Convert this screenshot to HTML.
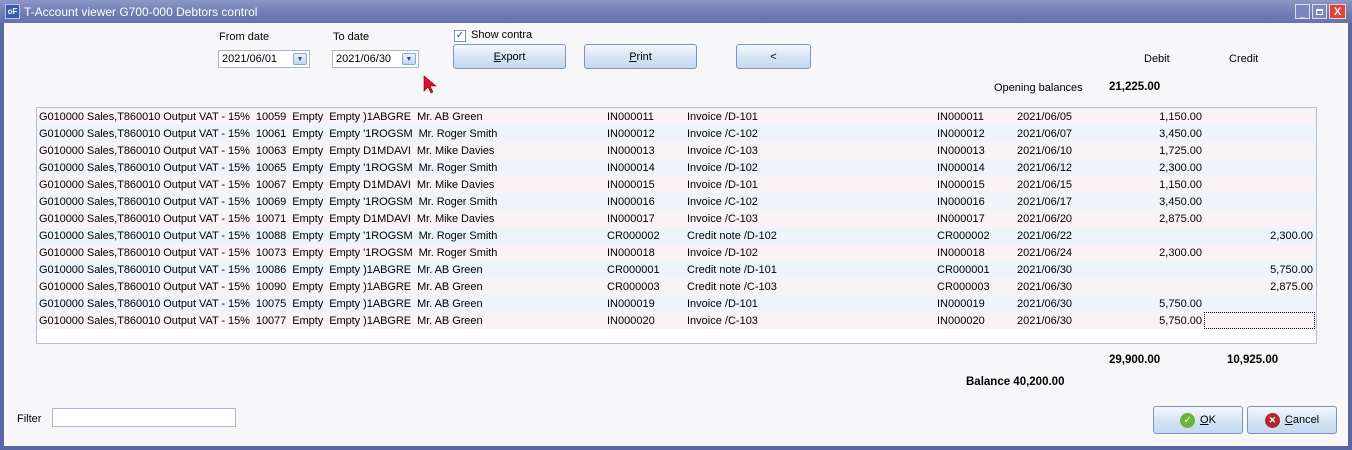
<!DOCTYPE html>
<html><head><style>
*{margin:0;padding:0;box-sizing:border-box}
body{width:1352px;height:450px;overflow:hidden;background:#5966a4;font-family:"Liberation Sans",sans-serif;font-size:11px;color:#000;position:relative}
.tb{position:absolute;left:0;top:0;width:1352px;height:23px;background:linear-gradient(#8d97c6,#6e7bb3 60%,#6574ad);color:#fff;font-size:12px}
.cl{position:absolute;left:4px;top:23px;right:4px;bottom:4px;background:#f7f7fa}
.a{position:absolute;white-space:nowrap}
.btn{position:absolute;height:25px;border:1px solid #7c95c0;border-radius:3px;background:linear-gradient(#f4f8fd,#d7e5f5 50%,#c2d7ef);text-align:center;line-height:24px;font-size:11px}
.dd{position:absolute;height:18px;border:1px solid #a9b6d4;background:#fff;padding-left:3px;line-height:16px}
.dd i{position:absolute;right:2px;top:2px;width:14px;height:12px;border:1px solid #8fa6cf;border-radius:2px;background:linear-gradient(#eaf1fb,#c4d6ef);font-style:normal;font-size:7px;line-height:11px;text-align:center;color:#2a4f9a}
.grid{position:absolute;left:36px;top:107px;width:1281px;height:237px;background:#fff;border:1px solid #b6bfd8}
.r{position:absolute;left:0;width:1279px;height:17px;line-height:19px}
.r span{position:absolute}
.r span:first-child{letter-spacing:-0.05px}
.b{font-weight:bold;font-size:11.5px}
</style></head><body>
<div class="tb">
<div class="a" style="left:5px;top:4px;width:15px;height:15px;background:#3c5bb0;border:1px solid #b8c4ea;color:#fff;font-size:8px;font-weight:bold;line-height:13px;text-align:center">oF</div>
<div class="a" style="left:24px;top:5px">T-Account viewer G700-000 Debtors control</div>
<div class="a" style="left:1295px;top:4px;width:15px;height:15px;border:1px solid #dde;background:#7b87be;color:#fff;font-size:9px;text-align:center;line-height:16px">_</div>
<div class="a" style="left:1312px;top:4px;width:15px;height:15px;border:1px solid #dde;background:#7b87be"><div style="margin:4px 3px;width:7px;height:6px;border:1px solid #fff;border-top-width:2px"></div></div>
<div class="a" style="left:1329px;top:4px;width:17px;height:15px;border:1px solid #fcc;background:#e0453a;color:#fff;font-weight:bold;font-size:11px;text-align:center;line-height:14px">X</div>
</div>
<div class="cl"></div>
<div class="a" style="left:219px;top:31px">From date</div>
<div class="a" style="left:333px;top:31px">To date</div>
<div class="dd" style="left:218px;top:50px;width:92px">2021/06/01<i>▼</i></div>
<div class="dd" style="left:332px;top:50px;width:87px">2021/06/30<i>▼</i></div>
<div class="a" style="left:454px;top:30px;width:12px;height:12px;border:1px solid #7b93c4;background:#fff;color:#2a4f9a;font-size:10px;line-height:10px;text-align:center">✓</div>
<div class="a" style="left:471px;top:29px">Show contra</div>
<div class="btn" style="left:453px;top:44px;width:113px"><u>E</u>xport</div>
<div class="btn" style="left:584px;top:44px;width:113px"><u>P</u>rint</div>
<div class="btn" style="left:736px;top:44px;width:75px">&lt;</div>
<svg class="a" style="left:423px;top:75px" width="16" height="20"><path d="M1 1 L1 16 L5 12 L8 18 L10 17 L7 11 L13 11 Z" fill="#e0102a" stroke="#700" stroke-width="0.6"/></svg>
<div class="a" style="left:1144px;top:53px">Debit</div>
<div class="a" style="left:1229px;top:53px">Credit</div>
<div class="a" style="left:994px;top:82px">Opening balances</div>
<div class="a b" style="left:1109px;top:81px">21,225.00</div>
<div class="grid">
<div class="r" style="top:0;background:#f9f3f6"><span style="left:2px">G010000 Sales,T860010 Output VAT - 15%&nbsp; 10059&nbsp; Empty&nbsp; Empty )1ABGRE&nbsp; Mr. AB Green</span><span style="left:570px">IN000011</span><span style="left:650px">Invoice /D-101</span><span style="left:900px">IN000011</span><span style="left:980px">2021/06/05</span><span style="right:114px">1,150.00</span></div>
<div class="r" style="top:17px;background:#edf4fb"><span style="left:2px">G010000 Sales,T860010 Output VAT - 15%&nbsp; 10061&nbsp; Empty&nbsp; Empty '1ROGSM&nbsp; Mr. Roger Smith</span><span style="left:570px">IN000012</span><span style="left:650px">Invoice /C-102</span><span style="left:900px">IN000012</span><span style="left:980px">2021/06/07</span><span style="right:114px">3,450.00</span></div>
<div class="r" style="top:34px;background:#f9f3f6"><span style="left:2px">G010000 Sales,T860010 Output VAT - 15%&nbsp; 10063&nbsp; Empty&nbsp; Empty D1MDAVI&nbsp; Mr. Mike Davies</span><span style="left:570px">IN000013</span><span style="left:650px">Invoice /C-103</span><span style="left:900px">IN000013</span><span style="left:980px">2021/06/10</span><span style="right:114px">1,725.00</span></div>
<div class="r" style="top:51px;background:#edf4fb"><span style="left:2px">G010000 Sales,T860010 Output VAT - 15%&nbsp; 10065&nbsp; Empty&nbsp; Empty '1ROGSM&nbsp; Mr. Roger Smith</span><span style="left:570px">IN000014</span><span style="left:650px">Invoice /D-102</span><span style="left:900px">IN000014</span><span style="left:980px">2021/06/12</span><span style="right:114px">2,300.00</span></div>
<div class="r" style="top:68px;background:#f9f3f6"><span style="left:2px">G010000 Sales,T860010 Output VAT - 15%&nbsp; 10067&nbsp; Empty&nbsp; Empty D1MDAVI&nbsp; Mr. Mike Davies</span><span style="left:570px">IN000015</span><span style="left:650px">Invoice /D-101</span><span style="left:900px">IN000015</span><span style="left:980px">2021/06/15</span><span style="right:114px">1,150.00</span></div>
<div class="r" style="top:85px;background:#edf4fb"><span style="left:2px">G010000 Sales,T860010 Output VAT - 15%&nbsp; 10069&nbsp; Empty&nbsp; Empty '1ROGSM&nbsp; Mr. Roger Smith</span><span style="left:570px">IN000016</span><span style="left:650px">Invoice /C-102</span><span style="left:900px">IN000016</span><span style="left:980px">2021/06/17</span><span style="right:114px">3,450.00</span></div>
<div class="r" style="top:102px;background:#f9f3f6"><span style="left:2px">G010000 Sales,T860010 Output VAT - 15%&nbsp; 10071&nbsp; Empty&nbsp; Empty D1MDAVI&nbsp; Mr. Mike Davies</span><span style="left:570px">IN000017</span><span style="left:650px">Invoice /C-103</span><span style="left:900px">IN000017</span><span style="left:980px">2021/06/20</span><span style="right:114px">2,875.00</span></div>
<div class="r" style="top:119px;background:#edf4fb"><span style="left:2px">G010000 Sales,T860010 Output VAT - 15%&nbsp; 10088&nbsp; Empty&nbsp; Empty '1ROGSM&nbsp; Mr. Roger Smith</span><span style="left:570px">CR000002</span><span style="left:650px">Credit note /D-102</span><span style="left:900px">CR000002</span><span style="left:980px">2021/06/22</span><span style="right:3px">2,300.00</span></div>
<div class="r" style="top:136px;background:#f9f3f6"><span style="left:2px">G010000 Sales,T860010 Output VAT - 15%&nbsp; 10073&nbsp; Empty&nbsp; Empty '1ROGSM&nbsp; Mr. Roger Smith</span><span style="left:570px">IN000018</span><span style="left:650px">Invoice /D-102</span><span style="left:900px">IN000018</span><span style="left:980px">2021/06/24</span><span style="right:114px">2,300.00</span></div>
<div class="r" style="top:153px;background:#edf4fb"><span style="left:2px">G010000 Sales,T860010 Output VAT - 15%&nbsp; 10086&nbsp; Empty&nbsp; Empty )1ABGRE&nbsp; Mr. AB Green</span><span style="left:570px">CR000001</span><span style="left:650px">Credit note /D-101</span><span style="left:900px">CR000001</span><span style="left:980px">2021/06/30</span><span style="right:3px">5,750.00</span></div>
<div class="r" style="top:170px;background:#f9f3f6"><span style="left:2px">G010000 Sales,T860010 Output VAT - 15%&nbsp; 10090&nbsp; Empty&nbsp; Empty )1ABGRE&nbsp; Mr. AB Green</span><span style="left:570px">CR000003</span><span style="left:650px">Credit note /C-103</span><span style="left:900px">CR000003</span><span style="left:980px">2021/06/30</span><span style="right:3px">2,875.00</span></div>
<div class="r" style="top:187px;background:#edf4fb"><span style="left:2px">G010000 Sales,T860010 Output VAT - 15%&nbsp; 10075&nbsp; Empty&nbsp; Empty )1ABGRE&nbsp; Mr. AB Green</span><span style="left:570px">IN000019</span><span style="left:650px">Invoice /D-101</span><span style="left:900px">IN000019</span><span style="left:980px">2021/06/30</span><span style="right:114px">5,750.00</span></div>
<div class="r" style="top:204px;background:#f9f3f6"><span style="left:2px">G010000 Sales,T860010 Output VAT - 15%&nbsp; 10077&nbsp; Empty&nbsp; Empty )1ABGRE&nbsp; Mr. AB Green</span><span style="left:570px">IN000020</span><span style="left:650px">Invoice /C-103</span><span style="left:900px">IN000020</span><span style="left:980px">2021/06/30</span><span style="right:114px">5,750.00</span><span style="left:1167px;top:0;width:111px;height:17px;border:1px dotted #000"></span></div>
</div>
<div class="a b" style="left:1109px;top:354px">29,900.00</div>
<div class="a b" style="left:1227px;top:354px">10,925.00</div>
<div class="a b" style="left:966px;top:376px">Balance 40,200.00</div>
<div class="a" style="left:17px;top:413px">Filter</div>
<div class="a" style="left:52px;top:408px;width:184px;height:19px;border:1px solid #a9b6d4;background:#fff"></div>
<div class="btn" style="left:1153px;top:406px;width:90px;height:28px;line-height:26px"><span style="display:inline-block;width:15px;height:15px;border-radius:50%;background:#6cb33a;color:#fff;font-size:10px;line-height:15px;vertical-align:middle;margin-right:5px">✓</span><u>O</u>K</div>
<div class="btn" style="left:1247px;top:406px;width:90px;height:28px;line-height:26px"><span style="display:inline-block;width:15px;height:15px;border-radius:50%;background:#b3282a;color:#fff;font-size:9px;font-weight:bold;line-height:15px;vertical-align:middle;margin-right:5px">✕</span><u>C</u>ancel</div>
</body></html>
